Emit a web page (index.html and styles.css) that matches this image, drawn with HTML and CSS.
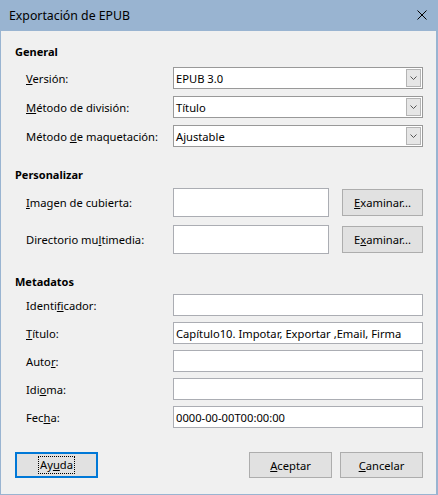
FILE: index.html
```html
<!DOCTYPE html>
<html lang="es">
<head>
    <meta charset="UTF-8">
    <title>Exportación de EPUB</title>
    <link rel="stylesheet" href="styles.css">
</head>
<body>
    <div class="window">
        <div class="titlebar">
            <span class="title">Exportación de EPUB</span>
            <svg class="close" width="10" height="10" viewBox="0 0 10 10">
                <path d="M0.5 0.5L9.5 9.5M9.5 0.5L0.5 9.5" stroke="#000" stroke-width="1" fill="none"/>
            </svg>
        </div>

        <div class="content">
            <section class="group group-general">
                <h2>General</h2>
                <div class="row combo-row">
                    <label><u>V</u>ersión:</label>
                    <div class="combo"><span class="value">EPUB 3.0</span><span class="drop"><svg width="7" height="4" viewBox="0 0 7 4"><path d="M0.5 0.5L3.5 3.5L6.5 0.5" stroke="#555" fill="none"/></svg></span></div>
                </div>
                <div class="row combo-row">
                    <label><u>M</u>étodo de división:</label>
                    <div class="combo"><span class="value">Título</span><span class="drop"><svg width="7" height="4" viewBox="0 0 7 4"><path d="M0.5 0.5L3.5 3.5L6.5 0.5" stroke="#555" fill="none"/></svg></span></div>
                </div>
                <div class="row combo-row">
                    <label>Método <u>d</u>e maquetación:</label>
                    <div class="combo"><span class="value">Ajustable</span><span class="drop"><svg width="7" height="4" viewBox="0 0 7 4"><path d="M0.5 0.5L3.5 3.5L6.5 0.5" stroke="#555" fill="none"/></svg></span></div>
                </div>
            </section>

            <section class="group group-custom">
                <h2>Personalizar</h2>
                <div class="row file-row">
                    <label><u>I</u>magen de cubierta:</label>
                    <div class="field tall"></div>
                    <button class="btn browse"><u>E</u>xaminar...</button>
                </div>
                <div class="row file-row">
                    <label>Directorio mu<u>l</u>timedia:</label>
                    <div class="field tall"></div>
                    <button class="btn browse">E<u>x</u>aminar...</button>
                </div>
            </section>

            <section class="group group-meta">
                <h2>Metadatos</h2>
                <div class="row meta-row">
                    <label>Identi<u>f</u>icador:</label>
                    <div class="field wide"></div>
                </div>
                <div class="row meta-row">
                    <label><u>T</u>ítulo:</label>
                    <div class="field wide">Capítulo10. Impotar, Exportar ,Email, Firma</div>
                </div>
                <div class="row meta-row">
                    <label>Auto<u>r</u>:</label>
                    <div class="field wide"></div>
                </div>
                <div class="row meta-row">
                    <label>Idi<u>o</u>ma:</label>
                    <div class="field wide"></div>
                </div>
                <div class="row meta-row">
                    <label>Fec<u>h</u>a:</label>
                    <div class="field wide">0000-00-00T00:00:00</div>
                </div>
            </section>

            <div class="footer">
                <button class="btn default"><span class="focus-ring">Ay<u>u</u>da</span></button>
                <div class="spacer"></div>
                <button class="btn"><u>A</u>ceptar</button>
                <button class="btn"><u>C</u>ancelar</button>
            </div>
        </div>
    </div>
</body>
</html>
```

FILE: styles.css
```css
body {
    margin: 0;
    font-family: "Segoe UI", "Noto Sans", sans-serif;
    font-size: 11.2px;
    color: #000;
    background: #f0f0f0;
}

.window {
    width: 438px;
    height: 495px;
    box-sizing: border-box;
    background-color: #99b4d1;
    padding: 0 2px 1px 1px;
    display: flex;
    flex-direction: column;
}

.titlebar {
    height: 31px;
    flex-shrink: 0;
    display: flex;
    align-items: center;
    padding: 0 9px 0 8px;
}

.title {
    flex: 1;
    font-size: 12.3px;
    margin-top: -1px;
}

.close {
    margin-top: -1px;
}

.content {
    flex: 1;
    background-color: #f0f0f0;
    padding: 13px 13px 0 14px;
    display: flex;
    flex-direction: column;
}

/* each group stacks its heading and rows */
.group {
    display: flex;
    flex-direction: column;
}

h2 {
    margin: 0;
    font-size: 11px;
    font-weight: bold;
    line-height: 16px;
    height: 16px;
}

.group-general {
    gap: 7px;
}

.group-custom {
    margin-top: 20px;
    gap: 8px;
}

.group-custom h2 {
    margin-bottom: -3px;
}

.group-meta {
    margin-top: 20px;
    gap: 6px;
}

.group-meta h2 {
    margin-bottom: -2px;
}

.row {
    display: flex;
    align-items: center;
    padding-left: 11px;
}

.row label {
    width: 147px;
    flex-shrink: 0;
}

.combo-row,
.meta-row {
    height: 22px;
}

.file-row {
    height: 29px;
}

.combo {
    flex: 1;
    height: 22px;
    box-sizing: border-box;
    border: 1px solid #999;
    background: #fff;
    display: flex;
    align-items: center;
}

.combo .value {
    flex: 1;
    padding-left: 2px;
}

.combo .drop {
    width: 15px;
    height: 18px;
    margin-right: 1px;
    box-sizing: border-box;
    border: 1px solid #b4b4b4;
    background: #e6e6e6;
    display: flex;
    align-items: center;
    justify-content: center;
}

.field {
    box-sizing: border-box;
    border: 1px solid #abadb3;
    background: #fff;
    padding-left: 2px;
    display: flex;
    align-items: center;
    white-space: nowrap;
    overflow: hidden;
}

.field.tall {
    width: 156px;
    height: 29px;
}

.field.wide {
    flex: 1;
    height: 22px;
}

.btn {
    font-family: inherit;
    font-size: 11.2px;
    color: #000;
    background-color: #e1e1e1;
    border: 1px solid #adadad;
    width: 81px;
    height: 27px;
    padding: 0;
    box-sizing: border-box;
}

.browse {
    margin-left: 13px;
}

.footer {
    display: flex;
    align-items: center;
    margin-top: 24px;
}

.footer .btn {
    width: 83px;
    height: 26px;
}

.footer .btn + .btn {
    margin-left: 8px;
}

.btn.default {
    border: 2px solid #0078d7;
}

.focus-ring {
    display: inline-block;
    padding: 0 1px;
    line-height: 16px;
    outline: 1px dotted #000;
}

.spacer {
    flex: 1;
}

u {
    text-underline-offset: 1px;
}
```
